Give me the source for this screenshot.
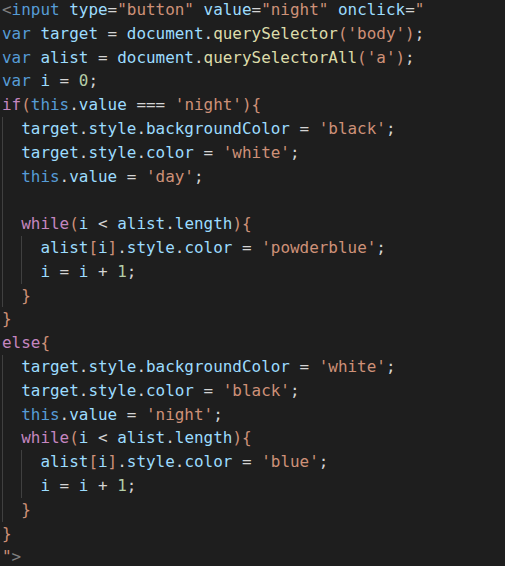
import React from "react";

const C = {
  k: "text-[#569cd6]",
  v: "text-[#9cdcfe]",
  f: "text-[#dcdcaa]",
  s: "text-[#ce9178]",
  o: "text-[#d4d4d4]",
  n: "text-[#b5cea8]",
  c: "text-[#c586c0]",
  g: "text-[#808080]",
};

type Tok = [keyof typeof C, string];

function Line({ t }: { t: Tok[] }) {
  return (
    <div className="h-[23.8px] whitespace-pre">
      {t.map(([c, s], i) => (
        <span key={i} className={C[c]}>
          {s}
        </span>
      ))}
    </div>
  );
}

function Guide({ inner, children }: { inner?: boolean; children: React.ReactNode }) {
  return (
    <div
      className={
        inner
          ? "ml-[19.2px] shadow-[inset_1px_0_0_#404040]"
          : "shadow-[inset_1px_0_0_#404040]"
      }
    >
      {children}
    </div>
  );
}

export default function App() {
  return (
    <div className="w-[505px] h-[566px] bg-[#1e1e1e] overflow-hidden font-['DejaVu_Sans_Mono',monospace] text-[15.94px] leading-[23.8px] pl-[2px]">
      <div className="-mt-[2px]">
        <Line
          t={[
            ["g", "<"],
            ["k", "input"],
            ["o", " "],
            ["v", "type"],
            ["o", "="],
            ["s", '"button"'],
            ["o", " "],
            ["v", "value"],
            ["o", "="],
            ["s", '"night"'],
            ["o", " "],
            ["v", "onclick"],
            ["o", "="],
            ["s", '"'],
          ]}
        />
        <Line
          t={[
            ["k", "var"],
            ["o", " "],
            ["v", "target"],
            ["o", " = "],
            ["v", "document"],
            ["o", "."],
            ["f", "querySelector"],
            ["s", "('body')"],
            ["o", ";"],
          ]}
        />
        <Line
          t={[
            ["k", "var"],
            ["o", " "],
            ["v", "alist"],
            ["o", " = "],
            ["v", "document"],
            ["o", "."],
            ["f", "querySelectorAll"],
            ["s", "('a')"],
            ["o", ";"],
          ]}
        />
        <Line
          t={[
            ["k", "var"],
            ["o", " "],
            ["v", "i"],
            ["o", " = "],
            ["n", "0"],
            ["o", ";"],
          ]}
        />
        <Line
          t={[
            ["c", "if"],
            ["s", "("],
            ["k", "this"],
            ["o", "."],
            ["v", "value"],
            ["o", " === "],
            ["s", "'night'"],
            ["s", "){"],
          ]}
        />
        <Guide>
          <Line
            t={[
              ["o", "  "],
              ["v", "target"],
              ["o", "."],
              ["v", "style"],
              ["o", "."],
              ["v", "backgroundColor"],
              ["o", " = "],
              ["s", "'black'"],
              ["o", ";"],
            ]}
          />
          <Line
            t={[
              ["o", "  "],
              ["v", "target"],
              ["o", "."],
              ["v", "style"],
              ["o", "."],
              ["v", "color"],
              ["o", " = "],
              ["s", "'white'"],
              ["o", ";"],
            ]}
          />
          <Line
            t={[
              ["o", "  "],
              ["k", "this"],
              ["o", "."],
              ["v", "value"],
              ["o", " = "],
              ["s", "'day'"],
              ["o", ";"],
            ]}
          />
          <Line t={[["o", " "]]} />
          <Line
            t={[
              ["o", "  "],
              ["c", "while"],
              ["s", "("],
              ["v", "i"],
              ["o", " < "],
              ["v", "alist"],
              ["o", "."],
              ["v", "length"],
              ["s", "){"],
            ]}
          />
          <Guide inner>
            <Line
              t={[
                ["o", "  "],
                ["v", "alist"],
                ["s", "["],
                ["v", "i"],
                ["s", "]"],
                ["o", "."],
                ["v", "style"],
                ["o", "."],
                ["v", "color"],
                ["o", " = "],
                ["s", "'powderblue'"],
                ["o", ";"],
              ]}
            />
            <Line
              t={[
                ["o", "  "],
                ["v", "i"],
                ["o", " = "],
                ["v", "i"],
                ["o", " + "],
                ["n", "1"],
                ["o", ";"],
              ]}
            />
          </Guide>
          <Line
            t={[
              ["o", "  "],
              ["s", "}"],
            ]}
          />
        </Guide>
        <Line t={[["s", "}"]]} />
        <Line
          t={[
            ["c", "else"],
            ["s", "{"],
          ]}
        />
        <Guide>
          <Line
            t={[
              ["o", "  "],
              ["v", "target"],
              ["o", "."],
              ["v", "style"],
              ["o", "."],
              ["v", "backgroundColor"],
              ["o", " = "],
              ["s", "'white'"],
              ["o", ";"],
            ]}
          />
          <Line
            t={[
              ["o", "  "],
              ["v", "target"],
              ["o", "."],
              ["v", "style"],
              ["o", "."],
              ["v", "color"],
              ["o", " = "],
              ["s", "'black'"],
              ["o", ";"],
            ]}
          />
          <Line
            t={[
              ["o", "  "],
              ["k", "this"],
              ["o", "."],
              ["v", "value"],
              ["o", " = "],
              ["s", "'night'"],
              ["o", ";"],
            ]}
          />
          <Line
            t={[
              ["o", "  "],
              ["c", "while"],
              ["s", "("],
              ["v", "i"],
              ["o", " < "],
              ["v", "alist"],
              ["o", "."],
              ["v", "length"],
              ["s", "){"],
            ]}
          />
          <Guide inner>
            <Line
              t={[
                ["o", "  "],
                ["v", "alist"],
                ["s", "["],
                ["v", "i"],
                ["s", "]"],
                ["o", "."],
                ["v", "style"],
                ["o", "."],
                ["v", "color"],
                ["o", " = "],
                ["s", "'blue'"],
                ["o", ";"],
              ]}
            />
            <Line
              t={[
                ["o", "  "],
                ["v", "i"],
                ["o", " = "],
                ["v", "i"],
                ["o", " + "],
                ["n", "1"],
                ["o", ";"],
              ]}
            />
          </Guide>
          <Line
            t={[
              ["o", "  "],
              ["s", "}"],
            ]}
          />
        </Guide>
        <Line t={[["s", "}"]]} />
        <Line
          t={[
            ["s", '"'],
            ["g", ">"],
          ]}
        />
      </div>
    </div>
  );
}
